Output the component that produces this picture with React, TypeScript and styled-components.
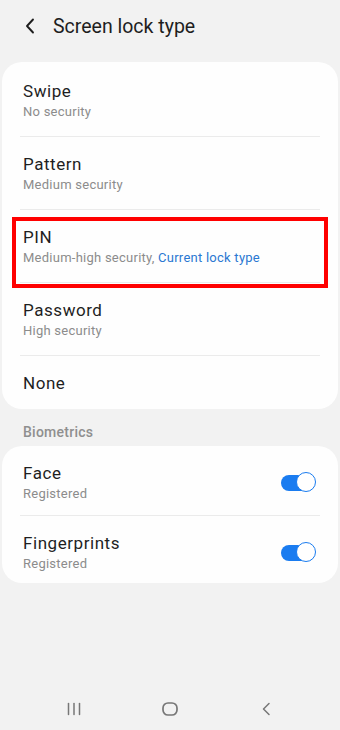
import React from 'react';
import styled, { createGlobalStyle } from 'styled-components';

const GlobalStyle = createGlobalStyle`
  html, body {
    margin: 0;
    padding: 0;
    background: #f2f2f2;
  }
  body {
    font-family: Roboto, "Liberation Sans", Arial, sans-serif;
    -webkit-font-smoothing: antialiased;
  }
`;

const Page = styled.div`
  display: flex;
  flex-direction: column;
  width: 340px;
  height: 730px;
  background: #f2f2f2;
  overflow: hidden;
`;

const Header = styled.div`
  display: flex;
  align-items: center;
  height: 52px;
  padding-left: 25px;
  gap: 18px;
  color: #1e1e1e;
`;

const Title = styled.h1`
  margin: 0;
  font-size: 19.5px;
  font-weight: 400;
`;

const Card = styled.div<{ $top?: number; $pad?: number }>`
  margin: ${p => p.$top ?? 0}px 2px 0;
  padding-top: ${p => p.$pad ?? 2}px;
  background: #fefefe;
  border-radius: 20px;
`;

const Row = styled.div<{ $bottom?: number; $marked?: boolean }>`
  position: relative;
  display: flex;
  align-items: center;
  padding: 16px 23px ${p => p.$bottom ?? 15}px 21px;

  ${p => p.$marked && `
    &::after {
      content: '';
      position: absolute;
      top: 7px;
      bottom: -6px;
      left: 10px;
      right: 10px;
      border: 4px solid #ff0000;
      z-index: 2;
    }
  `}
`;

const Texts = styled.div`
  display: flex;
  flex-direction: column;
  gap: 1px;
  flex: 1;
`;

const ItemTitle = styled.div`
  font-size: 17px;
  line-height: 22px;
  letter-spacing: 0.55px;
  color: #1f1f1f;
`;

const ItemSub = styled.div`
  font-size: 13px;
  line-height: 18px;
  letter-spacing: 0.25px;
  color: #8c8c8c;
`;

const Current = styled.span`
  color: #2a78d2;
`;

const Divider = styled.div`
  height: 1px;
  margin: 0 18px;
  background: #ebebeb;
`;

const SectionLabel = styled.div`
  padding: 14px 23px 5px;
  font-size: 14px;
  line-height: 18px;
  font-weight: 500;
  letter-spacing: 0.25px;
  color: #8f8f8f;
`;

const Switch = styled.div`
  position: relative;
  width: 34px;
  height: 16px;
  border-radius: 8px;
  background: #1a7cf0;

  &::after {
    content: '';
    position: absolute;
    right: -1px;
    top: 50%;
    width: 18px;
    height: 18px;
    margin-top: -10.5px;
    border-radius: 50%;
    background: #ffffff;
    border: 1.5px solid #1a7cf0;
  }
`;

const NavBar = styled.div`
  margin-top: auto;
  height: 42px;
  display: flex;
  align-items: center;
  justify-content: center;
  gap: 76px;
  color: #777777;
`;

const NavSlot = styled.div`
  width: 20px;
  display: flex;
  justify-content: center;
`;

const BackIcon = () => (
  <svg width="10" height="16" viewBox="0 0 10 16">
    <path d="M8 1.5 L2 8 L8 14.5" fill="none" stroke="currentColor" strokeWidth="1.9" strokeLinecap="round" strokeLinejoin="round" />
  </svg>
);

const RecentsIcon = () => (
  <svg width="18" height="14" viewBox="0 0 18 14">
    <g stroke="currentColor" strokeWidth="1.5" strokeLinecap="round">
      <line x1="3.5" y1="1.5" x2="3.5" y2="12.5" />
      <line x1="9" y1="1.5" x2="9" y2="12.5" />
      <line x1="14.5" y1="1.5" x2="14.5" y2="12.5" />
    </g>
  </svg>
);

const HomeIcon = () => (
  <svg width="18" height="16" viewBox="0 0 18 16">
    <rect x="2" y="2" width="14" height="12" rx="5" fill="none" stroke="currentColor" strokeWidth="1.7" />
  </svg>
);

const NavBackIcon = () => (
  <svg width="12" height="14" viewBox="0 0 12 14">
    <path d="M9 1.5 L3.5 7 L9 12.5" fill="none" stroke="currentColor" strokeWidth="1.5" strokeLinecap="round" strokeLinejoin="round" />
  </svg>
);

type LockItem = { title: string; sub?: React.ReactNode; marked?: boolean };

const lockTypes: LockItem[] = [
  { title: 'Swipe', sub: 'No security' },
  { title: 'Pattern', sub: 'Medium security' },
  {
    title: 'PIN',
    sub: <>Medium-high security, <Current>Current lock type</Current></>,
    marked: true,
  },
  { title: 'Password', sub: 'High security' },
  { title: 'None' },
];

const biometrics = [
  { title: 'Face', sub: 'Registered' },
  { title: 'Fingerprints', sub: 'Registered' },
];

const App: React.FC = () => {
  return (
    <Page>
      <GlobalStyle />
      <Header>
        <BackIcon />
        <Title>Screen lock type</Title>
      </Header>

      <Card $top={10}>
        {lockTypes.map((item, i) => (
          <React.Fragment key={item.title}>
            {i > 0 && <Divider />}
            <Row $marked={item.marked}>
              <Texts>
                <ItemTitle>{item.title}</ItemTitle>
                {item.sub && <ItemSub>{item.sub}</ItemSub>}
              </Texts>
            </Row>
          </React.Fragment>
        ))}
      </Card>

      <SectionLabel>Biometrics</SectionLabel>

      <Card $pad={0}>
        {biometrics.map((item, i) => (
          <React.Fragment key={item.title}>
            {i > 0 && <Divider />}
            <Row $bottom={i === biometrics.length - 1 ? 10 : 12}>
              <Texts>
                <ItemTitle>{item.title}</ItemTitle>
                <ItemSub>{item.sub}</ItemSub>
              </Texts>
              <Switch />
            </Row>
          </React.Fragment>
        ))}
      </Card>

      <NavBar>
        <NavSlot><RecentsIcon /></NavSlot>
        <NavSlot><HomeIcon /></NavSlot>
        <NavSlot><NavBackIcon /></NavSlot>
      </NavBar>
    </Page>
  );
};

export default App;
